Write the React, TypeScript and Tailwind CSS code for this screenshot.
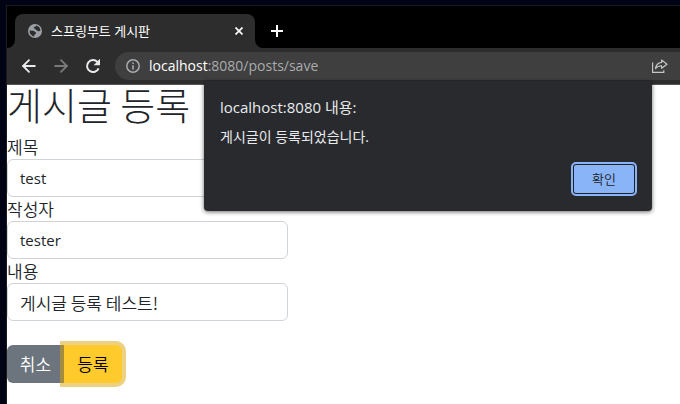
import { ArrowLeft, ArrowRight } from 'lucide-react';

const latin = 'text-[15px]';
const hangul = "font-['Noto_Sans_CJK_KR',sans-serif] text-[17px] font-[350]";

const fields = [
  { id: 'title', label: '제목', value: 'test', font: latin },
  { id: 'author', label: '작성자', value: 'tester', font: latin },
  { id: 'content', label: '내용', value: '게시글 등록 테스트!', font: hangul },
];

function GlobeIcon() {
  return (
    <svg className="size-[14px] shrink-0" viewBox="0 0 14 14" aria-hidden="true">
      <circle cx="7" cy="7" r="7" fill="#9aa0a6" />
      <path d="M1.6 6.4 5 6.7c1.5.2 1.9 1.1 2.6 1.6.8.5.6 1.4-.3 1.7-.9.2-.7 1.2-1.2 2.4A5.5 5.5 0 0 1 1.6 6.4Z" fill="#2d2d2d" />
      <path d="M8.2 1.6c-.1 1.2-1 1.3-2 1.4-.8.2-.5 1.2.3 1.5 1 .3.7 1.3 1.9 1.4 1 .1 1 1.4 2.1 1.3l1.9-.4A5.5 5.5 0 0 0 8.2 1.6Z" fill="#2d2d2d" />
    </svg>
  );
}

function ReloadIcon() {
  return (
    <svg className="size-4" viewBox="0 0 16 16" aria-hidden="true">
      <path d="M13.6 10.3A6 6 0 1 1 12.4 3.9L14 5.5" fill="none" stroke="#e8eaed" strokeWidth="2" />
      <path d="M15 .8v6.4H8.6Z" fill="#e8eaed" />
    </svg>
  );
}

function InfoIcon() {
  return (
    <svg className="size-[14px] shrink-0" viewBox="0 0 14 14" aria-hidden="true">
      <circle cx="7" cy="7" r="6.2" fill="none" stroke="#a8abaf" strokeWidth="1.5" />
      <path d="M7 6.2v4.3M7 3.4v1.5" stroke="#a8abaf" strokeWidth="1.6" />
    </svg>
  );
}

function ShareIcon() {
  return (
    <svg className="h-[14px] w-4" viewBox="0 0 16 14" fill="none" stroke="#c4c6c8" strokeWidth="1.2" aria-hidden="true">
      <path d="M.6 3.5v9.9h11.2v-2.2" />
      <path d="M9.6 1 15 5.2 9.6 9.2V6.9C6.8 6.7 5 7.6 3.5 9.6 3.9 6.2 6 3.7 9.6 3.3Z" strokeLinejoin="round" />
    </svg>
  );
}

function TabStrip() {
  return (
    <div className="flex h-[42px] items-end bg-black">
      <div className="size-2 bg-[#2d2d2d]">
        <div className="size-2 rounded-br-lg bg-black" />
      </div>
      <div className="flex h-[34px] w-60 items-center rounded-t-lg bg-[#2d2d2d] px-[13px] text-white">
        <GlobeIcon />
        <span className="ml-[9px] flex-1 text-[13px] leading-4">스프링부트 게시판</span>
        <button type="button" aria-label="탭 닫기" className="-mr-[5px] grid size-4 place-items-center">
          <svg className="size-2" viewBox="0 0 8 8" stroke="white" strokeWidth="1.7" aria-hidden="true">
            <path d="M.5.5l7 7M7.5.5l-7 7" />
          </svg>
        </button>
      </div>
      <div className="size-2 bg-[#2d2d2d]">
        <div className="size-2 rounded-bl-lg bg-black" />
      </div>
      <button type="button" aria-label="새 탭" className="ml-1 grid h-[34px] w-5 place-items-center">
        <svg className="size-3" viewBox="0 0 12 12" stroke="white" strokeWidth="2" aria-hidden="true">
          <path d="M6 0v12M0 6h12" />
        </svg>
      </button>
    </div>
  );
}

function Toolbar() {
  return (
    <div className="flex h-[37px] items-center border-b border-[#555] bg-[#2d2d2d] pl-3">
      <button type="button" aria-label="뒤로" className="grid w-5 place-items-center">
        <ArrowLeft size={20} strokeWidth={2.2} color="#e8eaed" />
      </button>
      <button type="button" aria-label="앞으로" className="ml-3 grid w-5 place-items-center">
        <ArrowRight size={20} strokeWidth={2.2} color="#77797b" />
      </button>
      <button type="button" aria-label="새로고침" className="ml-3 grid w-5 place-items-center">
        <ReloadIcon />
      </button>
      <div className="ml-3 flex h-7 flex-1 items-center rounded-l-full bg-[#3f3f3f] pl-[11px] pr-3">
        <InfoIcon />
        <span className="ml-[9px] flex-1 text-[14px] leading-5 text-[#a9abae]">
          <span className="text-white">localhost</span>:8080/posts/save
        </span>
        <button type="button" aria-label="공유">
          <ShareIcon />
        </button>
      </div>
    </div>
  );
}

function AlertDialog() {
  return (
    <div
      role="alertdialog"
      aria-labelledby="alert-title"
      aria-describedby="alert-text"
      className="absolute -top-1 right-7 w-[448px] rounded bg-[#292a2d] p-4 text-[#e8eaed] shadow-[0_1px_4px_rgba(0,0,0,0.6)]"
    >
      <h2 id="alert-title" className="text-[15px] leading-5">localhost:8080 내용:</h2>
      <p id="alert-text" className="mt-2 text-[14px] leading-6">게시글이 등록되었습니다.</p>
      <div className="mt-[15px] mb-px mr-px flex justify-end">
        <button
          type="button"
          className="h-[30px] w-[62px] rounded-[3px] border border-[#202124] bg-[#8ab4f8] font-['Noto_Sans_CJK_KR',sans-serif] text-[13px] font-[350] text-[#202124] outline-2 outline-[#8ab4f8]"
        >
          확인
        </button>
      </div>
    </div>
  );
}

export default function App() {
  return (
    <div className="min-h-screen bg-[#000314] pl-[6px] pt-[5px] font-['Open_Sans','Noto_Sans_CJK_KR',sans-serif]">
      <div className="flex min-h-[calc(100vh-5px)] flex-col border-l border-t border-[#1c1c1c] bg-white">
        <TabStrip />
        <Toolbar />
        <main className="relative flex-1 text-[17px] text-[#212529]">
          <h1 className="mb-3 font-['Noto_Sans_CJK_KR',sans-serif] text-[38px] font-light leading-[38px]">게시글 등록</h1>
          <form>
            {fields.map((field) => (
              <div key={field.id} className="w-[281px]">
                <label htmlFor={field.id} className="block font-['Noto_Sans_CJK_KR',sans-serif] font-[350] leading-6">
                  {field.label}
                </label>
                <input
                  id={field.id}
                  type="text"
                  defaultValue={field.value}
                  className={`block h-[38px] w-full rounded-md border border-[#ced4da] bg-white px-3 ${field.font}`}
                />
              </div>
            ))}
            <div className="mt-6 flex h-[38px] font-['Noto_Sans_CJK_KR',sans-serif] font-[350]">
              <button type="button" className="w-[57px] rounded-l-md bg-[#6c757d] text-white">취소</button>
              <button
                type="submit"
                className="relative w-[58px] rounded-r-md bg-[#ffca2c] text-black shadow-[0_0_0_4px_rgba(217,164,6,0.5)]"
              >
                등록
              </button>
            </div>
          </form>
          <AlertDialog />
        </main>
      </div>
    </div>
  );
}
